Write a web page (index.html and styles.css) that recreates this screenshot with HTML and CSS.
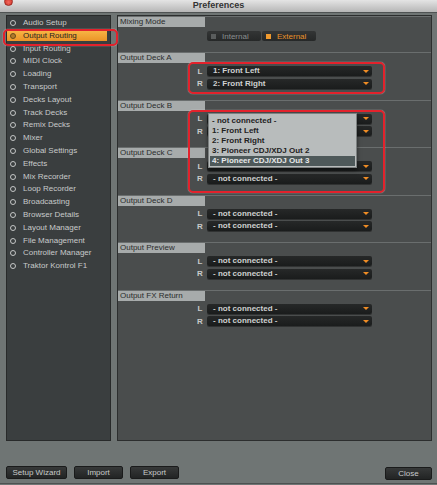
FILE: index.html
```html
<!DOCTYPE html>
<html lang="en">
<head>
<meta charset="UTF-8">
<title>Preferences</title>
<link rel="stylesheet" href="styles.css">
</head>
<body>
<div class="window">
  <div class="titlebar">
    <span class="close-dot"></span>
    <span class="title">Preferences</span>
  </div>

  <div class="content">
    <ul class="sidebar">
      <li>Audio Setup</li>
      <li class="active">Output Routing</li>
      <li>Input Routing</li>
      <li>MIDI Clock</li>
      <li>Loading</li>
      <li>Transport</li>
      <li>Decks Layout</li>
      <li>Track Decks</li>
      <li>Remix Decks</li>
      <li>Mixer</li>
      <li>Global Settings</li>
      <li>Effects</li>
      <li>Mix Recorder</li>
      <li>Loop Recorder</li>
      <li>Broadcasting</li>
      <li>Browser Details</li>
      <li>Layout Manager</li>
      <li>File Management</li>
      <li>Controller Manager</li>
      <li>Traktor Kontrol F1</li>
    </ul>

    <div class="panel">
      <div class="section mixing">
        <div class="section-title">Mixing Mode</div>
        <div class="mode-group">
          <div class="mode-btn"><span class="led"></span>Internal</div>
          <div class="mode-btn on"><span class="led"></span>External</div>
        </div>
      </div>

      <div class="section">
        <div class="section-title">Output Deck A</div>
        <div class="rows">
          <div class="row"><span class="ch">L</span><div class="select"><span>1: Front Left</span><span class="arrow"></span></div></div>
          <div class="row"><span class="ch">R</span><div class="select"><span>2: Front Right</span><span class="arrow"></span></div></div>
        </div>
      </div>

      <!-- valeurs cachées sous le menu ouvert -->
      <div class="section">
        <div class="section-title">Output Deck B</div>
        <div class="rows">
          <div class="row"><span class="ch">L</span><div class="select"><span></span><span class="arrow"></span></div></div>
          <div class="row"><span class="ch">R</span><div class="select"><span></span><span class="arrow"></span></div></div>
        </div>
      </div>

      <div class="section">
        <div class="section-title">Output Deck C</div>
        <div class="rows">
          <div class="row"><span class="ch">L</span><div class="select"><span></span><span class="arrow"></span></div></div>
          <div class="row"><span class="ch">R</span><div class="select"><span>- not connected -</span><span class="arrow"></span></div></div>
        </div>
      </div>

      <div class="section">
        <div class="section-title">Output Deck D</div>
        <div class="rows">
          <div class="row"><span class="ch">L</span><div class="select"><span>- not connected -</span><span class="arrow"></span></div></div>
          <div class="row"><span class="ch">R</span><div class="select"><span>- not connected -</span><span class="arrow"></span></div></div>
        </div>
      </div>

      <div class="section">
        <div class="section-title">Output Preview</div>
        <div class="rows">
          <div class="row"><span class="ch">L</span><div class="select"><span>- not connected -</span><span class="arrow"></span></div></div>
          <div class="row"><span class="ch">R</span><div class="select"><span>- not connected -</span><span class="arrow"></span></div></div>
        </div>
      </div>

      <div class="section">
        <div class="section-title">Output FX Return</div>
        <div class="rows">
          <div class="row"><span class="ch">L</span><div class="select"><span>- not connected -</span><span class="arrow"></span></div></div>
          <div class="row"><span class="ch">R</span><div class="select"><span>- not connected -</span><span class="arrow"></span></div></div>
        </div>
      </div>
    </div>
  </div>

  <div class="footer">
    <button class="btn wide">Setup Wizard</button>
    <button class="btn">Import</button>
    <button class="btn">Export</button>
    <button class="btn close">Close</button>
  </div>

  <!-- menu ouvert sur Deck B / L -->
  <ul class="popup">
    <li>- not connected -</li>
    <li>1: Front Left</li>
    <li>2: Front Right</li>
    <li>3: Pioneer CDJ/XDJ Out 2</li>
    <li class="selected">4: Pioneer CDJ/XDJ Out 3</li>
  </ul>

  <!-- annotations rouges -->
  <div class="mark mark-nav"></div>
  <div class="mark mark-a"></div>
  <div class="mark mark-bc"></div>
</div>
</body>
</html>
```

FILE: styles.css
```css
* {
  box-sizing: border-box;
}
html, body {
  margin: 0;
  padding: 0;
}
body {
  width: 437px;
  height: 485px;
  overflow: hidden;
  background-color: #6f7574;
  font-family: "Liberation Sans", Arial, sans-serif;
  font-size: 8px;
  color: #c8caca;
}
.window {
  position: relative;
  width: 437px;
  height: 485px;
}

/* barre de titre */
.titlebar {
  position: relative;
  height: 13px;
  background: linear-gradient(#e4e4e4, #b6b6b6);
  border-bottom: 1px solid #4f5353;
  display: flex;
  justify-content: center;
}
.title {
  font-size: 9px;
  font-weight: bold;
  line-height: 10px;
  color: #333;
}
.close-dot {
  position: absolute;
  left: 4px;
  top: -3px;
  width: 9px;
  height: 9px;
  border-radius: 50%;
  background: radial-gradient(circle at 50% 60%, #f36a5f, #c8281e);
  border: 1px solid #9c2a22;
}

/* zone principale */
.content {
  display: flex;
  gap: 6px;
  padding: 2px 5px 0 6px;
}
.sidebar {
  list-style: none;
  margin: 0;
  padding: 2px 0 0;
  width: 105px;
  height: 426px;
  background-color: #3a3e3f;
  border: 1px solid #282a2a;
  display: flex;
  flex-direction: column;
  gap: 2.8px;
}
.sidebar li {
  height: 10px;
  line-height: 10px;
  display: flex;
  align-items: center;
  white-space: nowrap;
}
.sidebar li::before {
  content: "";
  width: 4px;
  height: 4px;
  margin: 0 7px 0 3px;
  border: 1px solid #c4c6c6;
  border-radius: 50%;
}
.sidebar li.active {
  margin-right: 3px;
  background: linear-gradient(#f7b444, #eb9427);
  color: #1e1e1e;
}
.sidebar li.active::before {
  border-color: #6a4a1a;
  background-color: #b07a2a;
}

.panel {
  width: 315px;
  height: 426px;
  background-color: #4a4d4d;
  border: 1px solid #2c2e2e;
}
.section {
  height: 47.6px;
  border-top: 1px solid #6a6e6e;
}
.section.mixing {
  height: 36px;
}
.section-title {
  width: 87px;
  height: 10px;
  line-height: 10px;
  padding-left: 2px;
  background-color: #a7abab;
  color: #2a2c2c;
}

/* mode de mixage */
.mode-group {
  display: flex;
  gap: 1px;
  margin: 4px 0 0 89px;
}
.mode-btn {
  width: 54px;
  height: 10px;
  display: flex;
  align-items: center;
  gap: 6px;
  padding-left: 4px;
  background: linear-gradient(#333535, #262828);
  border-radius: 2px;
  color: #8b8f8f;
}
.mode-btn .led {
  width: 5px;
  height: 5px;
  background-color: #5a5d5d;
}
.mode-btn.on {
  color: #e9922a;
}
.mode-btn.on .led {
  background-color: #f09a2e;
}

/* lignes L / R */
.rows {
  display: flex;
  flex-direction: column;
  gap: 2.5px;
  margin-top: 3px;
}
.row {
  display: flex;
  align-items: center;
  height: 10px;
  padding-left: 76px;
}
.ch {
  width: 12px;
  text-align: center;
  font-weight: bold;
  color: #c8caca;
}
.select {
  width: 165px;
  height: 10px;
  margin-left: 1px;
  padding: 0 3px 0 6px;
  display: flex;
  align-items: center;
  justify-content: space-between;
  background: linear-gradient(#262828, #1a1c1c);
  border-radius: 2px;
  box-shadow: 0 1px 0 rgba(0, 0, 0, 0.35);
  font-weight: bold;
  color: #cfd1d1;
  line-height: 10px;
}
.arrow {
  width: 0;
  height: 0;
  border-left: 3px solid transparent;
  border-right: 3px solid transparent;
  border-top: 3px solid #ef8c24;
}

/* boutons du bas */
.footer {
  display: flex;
  gap: 7px;
  height: 43px;
  padding: 25px 5px 0 6px;
  border-bottom: 1px solid #4d5151;
}
.btn {
  width: 49px;
  height: 13px;
  padding: 0;
  background: linear-gradient(#373939, #222424);
  border: 1px solid #1a1b1b;
  border-radius: 2px;
  font-family: "Liberation Sans", Arial, sans-serif;
  font-size: 8px;
  color: #c8caca;
}
.btn.wide {
  width: 61px;
}
.btn.close {
  width: 47px;
  margin: 1px 0 0 auto;
}

/* menu déroulant ouvert */
.popup {
  position: absolute;
  left: 208px;
  top: 113px;
  width: 149px;
  margin: 0;
  padding: 2px 1px 1px;
  list-style: none;
  background-color: #b8bcbc;
  border: 1px solid #7c8080;
  box-shadow: 0 2px 4px rgba(0, 0, 0, 0.5);
}
.popup li {
  height: 10px;
  line-height: 10px;
  padding-left: 2px;
  font-weight: bold;
  color: #1f2222;
}
.popup li.selected {
  background-color: #4e595a;
  color: #e6e8e8;
}

/* cadres rouges */
.mark {
  position: absolute;
  border: 2px solid #e3222c;
  border-radius: 5px;
  box-shadow: 0 0 1px #fff;
}
.mark-nav {
  left: 3px;
  top: 29px;
  width: 115px;
  height: 17px;
}
.mark-a {
  left: 188px;
  top: 62px;
  width: 197px;
  height: 32px;
}
.mark-bc {
  left: 188px;
  top: 110px;
  width: 197px;
  height: 83px;
}
```
